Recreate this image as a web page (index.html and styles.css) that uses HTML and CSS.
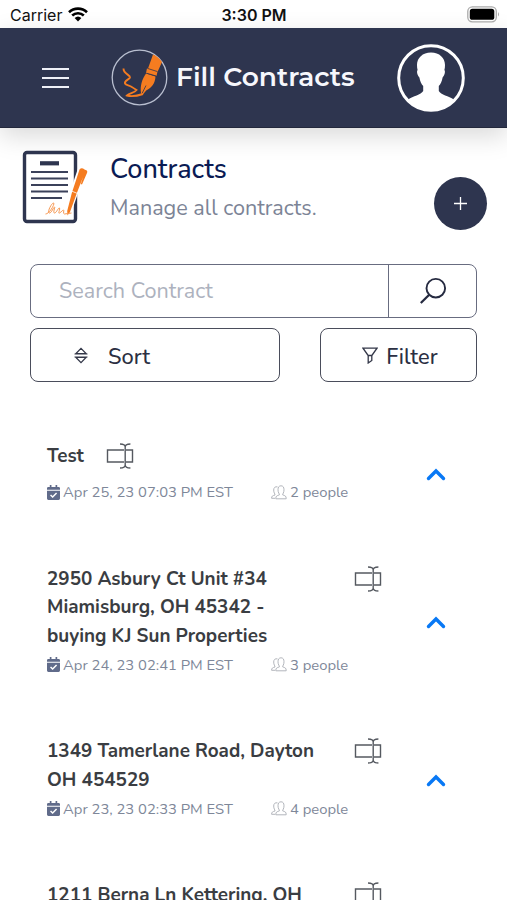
FILE: index.html
```html
<!DOCTYPE html>
<html lang="en">
<head>
  <meta charset="utf-8">
  <meta name="viewport" content="width=device-width, initial-scale=1">
  <title>Fill Contracts</title>
  <link rel="stylesheet" href="styles.css">
</head>
<body>

  <!-- Icons used more than once -->
  <svg class="sprite" width="0" height="0">
    <symbol id="rename" viewBox="0 0 28 26">
      <path d="M18 7H1.500v12H18M20 7H26.500v12H20M19.200 3.500v19M14 1c3 0 5.200 1 5.200 3 0-2 2-3 5.200-3M14 25c3 0 5.200-1 5.200-3 0 2 2 3 5.200 3" fill="none" stroke="currentColor" stroke-width="1.400"/>
    </symbol>
    <symbol id="calendar" viewBox="0 0 14 16">
      <path d="M3 0h1.800v2h4.400V0H11v2h1.500Q14 2 14 3.500V5H0V3.500Q0 2 1.500 2H3zM0 6h14v8.500q0 1.500-1.500 1.500h-11Q0 16 0 14.500z" fill="currentColor"/>
      <path d="M3.800 10.600l2.300 2.300 4.200-4.300" fill="none" stroke="#fff" stroke-width="1.600"/>
    </symbol>
    <symbol id="people" viewBox="0 0 16 15">
      <path d="M4.800 13.800h10.400c0-3-1-3-3.600-4 0-1 1.400-2 1.400-5 0-2.600-1-4-3-4s-3 1.400-3 4c0 3 1.500 4 1.500 5-2.700 1-3.700 1-3.700 4zM6.500 1.900C4.200 1.300 2.700 2.600 2.700 5c0 3 1.300 3.600 1.300 5-2.500.8-3.400 1-3.400 3.300h3.500" fill="none" stroke="currentColor" stroke-width="1"/>
    </symbol>
    <symbol id="chevron" viewBox="0 0 20 13">
      <path d="M2.500 10.500L10 3l7.500 7.500" fill="none" stroke="currentColor" stroke-width="3.400" stroke-linecap="round"/>
    </symbol>
  </svg>

  <div class="status-bar">
    <div class="carrier">
      <span>Carrier</span>
      <svg width="20" height="15" viewBox="0 0 20 15">
        <path d="M1 5.200a13 13 0 0 1 18 0M4.200 8.500a8.400 8.400 0 0 1 11.600 0" fill="none" stroke="#000" stroke-width="2.600"/>
        <path d="M6.600 11a5 5 0 0 1 6.800 0L10 14.500z"/>
      </svg>
    </div>
    <div class="time">3:30 PM</div>
    <svg class="battery" width="33" height="17" viewBox="0 0 33 17">
      <rect x=".8" y=".8" width="28.500" height="15" rx="4.500" fill="none" stroke="#aaa" stroke-width="1.300"/>
      <rect x="2.800" y="2.800" width="24.500" height="11" rx="2.600"/>
      <path d="M31 6q2 2.300 0 4.600z" fill="#aaa"/>
    </svg>
  </div>

  <header class="navbar">
    <button class="menu" aria-label="Menu">
      <span></span><span></span><span></span>
    </button>
    <div class="brand">
      <svg width="57" height="57" viewBox="0 0 57 57">
        <circle cx="28.500" cy="28.500" r="27.300" fill="none" stroke="#b9bfd0" stroke-width="1.300"/>
        <path d="M42 5.500q5.500 2 9 7.500l-4.500 10-9.500-3.500zM36 19.300l10.500 3.200-1 4.500-10.500-3zM35 24.500l9.500 3c-.5 7-3.500 11-9.300 14L31.500 46l-1.500-2c-1-7 1-14 5-19.500z" fill="#f57c20"/>
        <path d="M35.500 24.200l10 2.900M36.500 19.400l10 3.200M31 44.500l4-8" fill="none" stroke="#2e354f" stroke-width=".8"/>
        <path d="M12.500 19.500c0 6 7 6 6.500 9-.5 2-6 3-5 6 1 2 4 1.500 6 3 2 1.200 4 2.500 5.500 3.500-2 3-7 3-9.500 5.500 5 1.500 10 .5 16-1.500" fill="none" stroke="#f57c20" stroke-width="1.900"/>
      </svg>
      <span>Fill Contracts</span>
    </div>
    <svg class="avatar" width="68" height="68" viewBox="0 0 68 68">
      <circle cx="34" cy="34" r="32.300" fill="none" stroke="#fff" stroke-width="3"/>
      <path d="M34 8.500c8.500 0 14 5.500 14 12.500 0 2-.2 3.500-.6 5 1.500 2-.4 6-1.800 7.500-.7 4-2 6.500-3.800 8.500v5c2 4 10 5 15 8.500C51 62 43 66.500 34 66.500S17 62 11.200 55.500C16 52 24 51 26.200 47v-5c-1.800-2-3.100-4.500-3.800-8.500-1.400-1.500-3.300-5.500-1.800-7.500-.4-1.500-.6-3-.6-5 0-7 5.500-12.500 14-12.500z" fill="#fff"/>
    </svg>
  </header>

  <main>
    <section class="page-title">
      <svg class="doc" width="66" height="74" viewBox="0 0 66 74">
        <rect x="2.500" y="2.500" width="51" height="69" rx="2.500" fill="#fff" stroke="#2e354f" stroke-width="3.400"/>
        <path d="M18 13.300h19" stroke="#2e354f" stroke-width="4.200"/>
        <path d="M9 22h37M9 28.500h37M9 35h37M9 41.500h37M9 48h31" stroke="#3b415a" stroke-width="2.200"/>
        <path d="M60 19l-15 44" stroke="#fff" stroke-width="8"/>
        <path d="M57.500 19.500q2-2.500 5 0l2.300 1q.8 1 .3 2.300L60 34.500l-1.200-.4 2.200-7-6.500 17L48 62l-2.500 3.500-.3-4.500 4.600-18z" fill="#f57c20"/>
        <path d="M49.500 41l6 2.500" stroke="#fff" stroke-width=".8"/>
        <path d="M23.500 64c4 0 10-11 8-11s-7 10-4 10c2 0 4-6 5-6s-2 6 0 6 4-6 5-5-2 6 0 5 3-3 4-3-1 4 1 4 5-1 7-1" fill="none" stroke="#f79a55" stroke-width="1"/>
      </svg>
      <div class="title-text">
        <h1>Contracts</h1>
        <p>Manage all contracts.</p>
      </div>
      <button class="add" aria-label="Add contract">
        <svg width="15" height="15" viewBox="0 0 15 15">
          <path d="M7.500 1v13M1 7.500h13" stroke="#fff" stroke-width="1.300"/>
        </svg>
      </button>
    </section>

    <section class="tools">
      <div class="search">
        <input type="text" placeholder="Search Contract">
        <button aria-label="Search">
          <svg width="28" height="28" viewBox="0 0 28 28">
            <circle cx="16.800" cy="11.200" r="9.300" fill="none" stroke="#252a40" stroke-width="1.900"/>
            <path d="M10.200 17.800L1.800 26" stroke="#252a40" stroke-width="2.300"/>
          </svg>
        </button>
      </div>
      <div class="filters">
        <button class="sort">
          <svg width="14" height="17" viewBox="0 0 14 17">
            <path d="M2 6.500L7 1.300l5 5.200zM2 10.500l5 5.200 5-5.200zM.5 7h13M.5 10h13" fill="none" stroke="#333748" stroke-width="1.200"/>
          </svg>
          <span>Sort</span>
        </button>
        <button class="filter">
          <svg width="16" height="17" viewBox="0 0 16 17">
            <path d="M1 1.200h14L9.800 8.500v5L6.200 16V8.500zM6.200 8.500h3.600" fill="none" stroke="#333748" stroke-width="1.300"/>
          </svg>
          <span>Filter</span>
        </button>
      </div>
    </section>

    <section class="contracts">
      <article class="contract">
        <div class="info">
          <div class="name short">
            <h2>Test</h2>
            <svg class="rename"><use href="#rename"/></svg>
          </div>
          <div class="meta">
            <span class="date"><svg class="cal"><use href="#calendar"/></svg><span>Apr 25, 23 07:03 PM EST</span></span>
            <span class="people"><svg class="ppl"><use href="#people"/></svg><span>2 people</span></span>
          </div>
        </div>
        <svg class="chevron"><use href="#chevron"/></svg>
      </article>

      <article class="contract">
        <div class="info">
          <div class="name">
            <h2>2950 Asbury Ct Unit #34<br>Miamisburg, OH 45342 -<br>buying KJ Sun Properties</h2>
            <svg class="rename"><use href="#rename"/></svg>
          </div>
          <div class="meta">
            <span class="date"><svg class="cal"><use href="#calendar"/></svg><span>Apr 24, 23 02:41 PM EST</span></span>
            <span class="people"><svg class="ppl"><use href="#people"/></svg><span>3 people</span></span>
          </div>
        </div>
        <svg class="chevron"><use href="#chevron"/></svg>
      </article>

      <article class="contract">
        <div class="info">
          <div class="name">
            <h2>1349 Tamerlane Road, Dayton<br>OH 454529</h2>
            <svg class="rename"><use href="#rename"/></svg>
          </div>
          <div class="meta">
            <span class="date"><svg class="cal"><use href="#calendar"/></svg><span>Apr 23, 23 02:33 PM EST</span></span>
            <span class="people"><svg class="ppl"><use href="#people"/></svg><span>4 people</span></span>
          </div>
        </div>
        <svg class="chevron"><use href="#chevron"/></svg>
      </article>

      <article class="contract">
        <div class="info">
          <div class="name">
            <h2>1211 Berna Ln Kettering, OH</h2>
            <svg class="rename"><use href="#rename"/></svg>
          </div>
        </div>
      </article>
    </section>
  </main>

</body>
</html>
```
FILE: styles.css
```css
* {
  box-sizing: border-box;
}

body {
  margin: 0;
  height: 900px;
  overflow: hidden;
  background: #fff;
  font-family: Nunito, Lato, sans-serif;
  color: #3a3d42;
}

h1, h2, p {
  margin: 0;
}

button {
  padding: 0;
  border: none;
  background: none;
  font-family: inherit;
  color: inherit;
}

svg {
  display: block;
  flex: none;
}

.sprite {
  position: absolute;
}

/* Status bar */
.status-bar {
  display: grid;
  grid-template-columns: 1fr auto 1fr;
  align-items: center;
  height: 28px;
  padding: 1px 7px 0 10px;
  font-family: Inter, sans-serif;
  font-size: 16px;
  color: #111;
}

.carrier {
  display: flex;
  align-items: center;
  gap: 6px;
}

.time {
  margin-right: 2px;
  font-weight: 600;
}

.battery {
  justify-self: end;
}

/* Header */
.navbar {
  display: flex;
  align-items: center;
  height: 100px;
  padding: 0 42px;
  background: #2e354f;
  border-bottom: 1px solid #23283c;
  box-shadow: 0 8px 24px rgba(0, 0, 0, 0.15);
}

.menu {
  display: flex;
  flex-direction: column;
  gap: 7px;
  width: 27px;
}

.menu span {
  height: 2px;
  background: #eef0f7;
}

.brand {
  display: flex;
  align-items: center;
  gap: 8px;
  margin-left: 42px;
  font-family: Montserrat, Inter, sans-serif;
  font-size: 26.5px;
  font-weight: 600;
  white-space: nowrap;
  color: #f6f7fc;
}

.brand span {
  padding-bottom: 3px;
}

.avatar {
  margin-left: auto;
}

/* Page title */
.page-title {
  display: flex;
  height: 136px;
  padding: 22px 20px 0 22px;
}

.title-text {
  margin-left: 22px;
  padding-top: 3px;
}

.title-text h1 {
  font-size: 27px;
  font-weight: 500;
  line-height: 34px;
  color: #0b1b54;
}

.title-text p {
  margin-top: 5px;
  font-size: 21.6px;
  line-height: 32px;
  color: #7c8496;
}

.add {
  display: flex;
  justify-content: center;
  align-items: center;
  width: 53px;
  height: 53px;
  margin: 27px 0 0 auto;
  border-radius: 50%;
  background: #2e354f;
}

/* Search and filters */
.tools {
  padding: 0 30px;
}

.search {
  display: flex;
  height: 54px;
  border: 1.5px solid #686c80;
  border-radius: 8px;
}

.search input {
  flex: 1;
  min-width: 0;
  padding: 0 28px;
  border: none;
  background: none;
  font-family: inherit;
  font-size: 21.6px;
}

.search input::placeholder {
  color: #adb2be;
}

.search button {
  display: flex;
  justify-content: center;
  align-items: center;
  width: 88px;
  border-left: 1.5px solid #686c80;
}

.filters {
  display: flex;
  justify-content: space-between;
  margin-top: 10px;
}

.filters button {
  display: flex;
  align-items: center;
  height: 54px;
  border: 1.5px solid #4a4d5b;
  border-radius: 8px;
  font-size: 21.8px;
  font-weight: 500;
  color: #2b2f42;
}

.filters span {
  padding-top: 3px;
}

.filters .sort {
  gap: 20px;
  width: 250px;
  padding-left: 43px;
}

.filters .filter {
  justify-content: center;
  gap: 8px;
  width: 157px;
  padding-left: 3px;
}

/* Contract list */
.contracts {
  display: flex;
  flex-direction: column;
  gap: 58px;
  padding: 60px 61px 0 47px;
}

.contract {
  display: flex;
  justify-content: space-between;
  align-items: center;
}

.info {
  width: 335px;
}

.name {
  display: flex;
  justify-content: space-between;
}

.name.short {
  justify-content: flex-start;
  gap: 22px;
}

.name h2 {
  font-size: 18.9px;
  font-weight: 700;
  line-height: 28.5px;
  white-space: nowrap;
}

.rename {
  width: 28px;
  height: 26px;
  margin-top: 1px;
  color: #555960;
}

.meta {
  display: flex;
  height: 29px;
  align-items: center;
  font-size: 14.8px;
  white-space: nowrap;
  color: #7e8799;
}

.short + .meta {
  margin-top: 7px;
}

.date {
  display: flex;
  align-items: center;
  gap: 3px;
  width: 224px;
}

.people {
  display: flex;
  align-items: center;
  gap: 3px;
}

.cal {
  width: 13px;
  height: 15px;
  color: #606b8a;
}

.ppl {
  width: 16px;
  height: 15px;
  color: #b3b6bc;
}

.chevron {
  width: 20px;
  height: 13px;
  margin-top: 1px;
  color: #0878f5;
}
```
